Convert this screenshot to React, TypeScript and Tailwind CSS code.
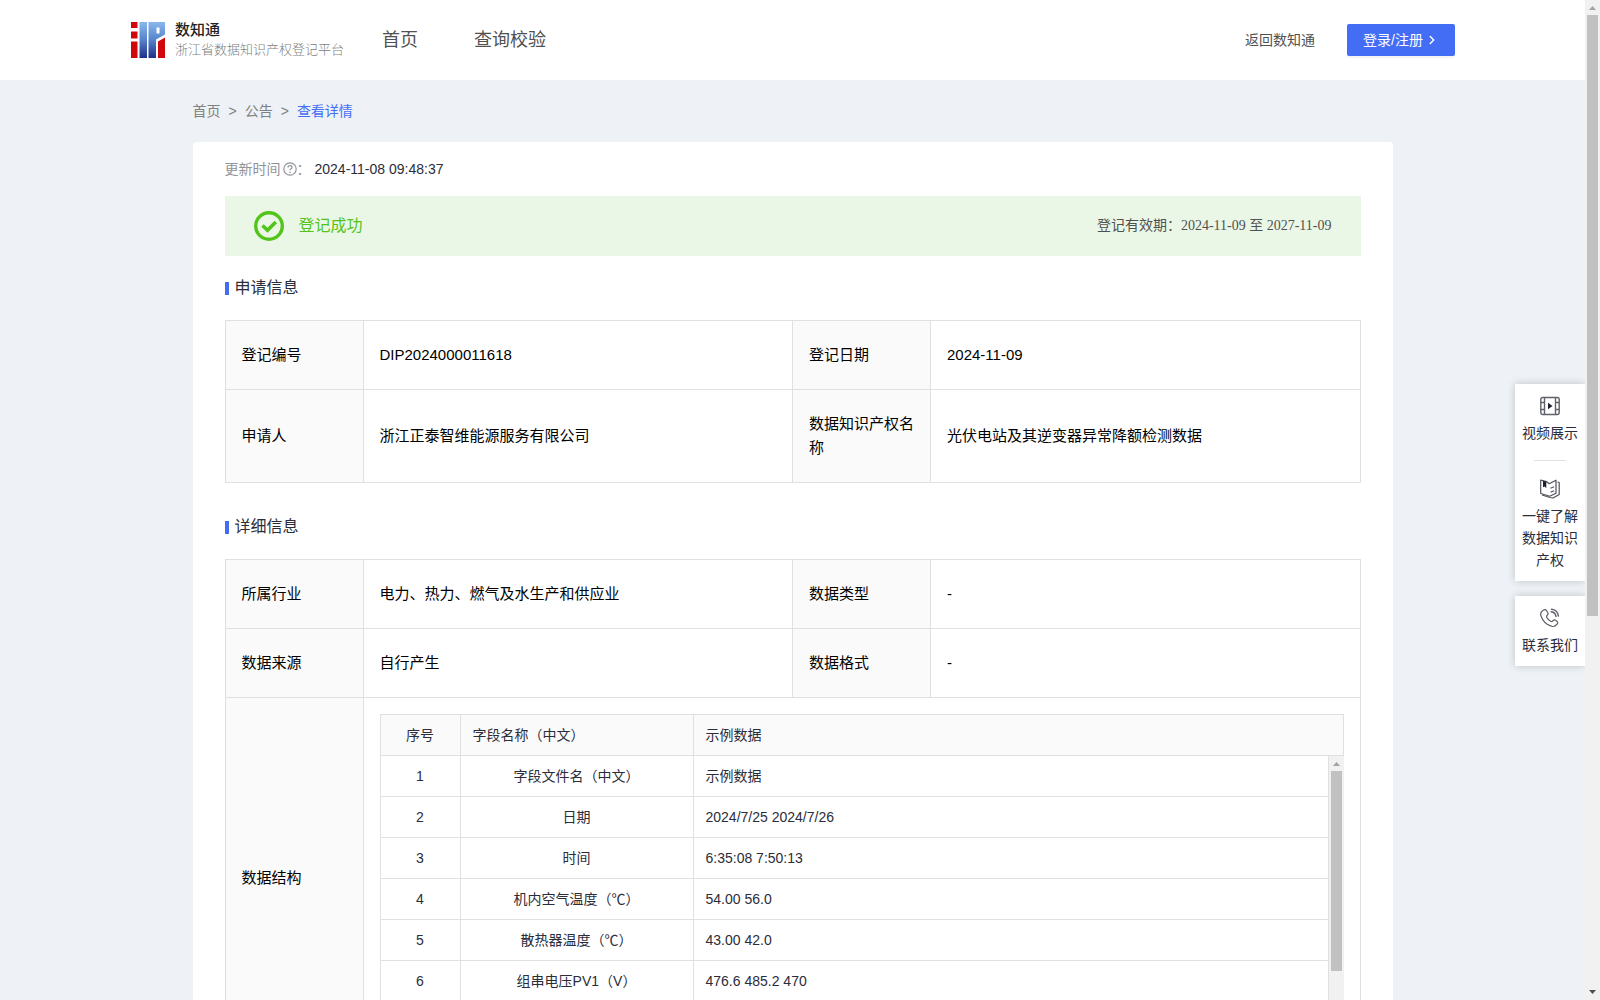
import React from 'react';
import { ChevronRight } from 'lucide-react';

const applyInfo = [
  ['登记编号', 'DIP2024000011618', '登记日期', '2024-11-09'],
  ['申请人', '浙江正泰智维能源服务有限公司', '数据知识产权名称', '光伏电站及其逆变器异常降额检测数据'],
];

const detailInfo = [
  ['所属行业', '电力、热力、燃气及水生产和供应业', '数据类型', '-'],
  ['数据来源', '自行产生', '数据格式', '-'],
];

const fields = [
  ['字段文件名（中文）', '示例数据'],
  ['日期', '2024/7/25 2024/7/26'],
  ['时间', '6:35:08 7:50:13'],
  ['机内空气温度（℃）', '54.00 56.0'],
  ['散热器温度（℃）', '43.00 42.0'],
  ['组串电压PV1（V）', '476.6 485.2 470'],
];

const Logo: React.FC = () => (
  <svg width="34" height="36" viewBox="0 0 34 36" aria-hidden="true">
    <defs>
      <linearGradient id="logoBlue" gradientUnits="userSpaceOnUse" x1="0" y1="0" x2="0" y2="36">
        <stop offset="0" stopColor="#8ab8ec" />
        <stop offset="0.5" stopColor="#5583cb" />
        <stop offset="1" stopColor="#1f2f86" />
      </linearGradient>
    </defs>
    <path d="M0 0h6.500v6H0z" fill="#d0080c" />
    <path d="M0 9.500h6.500v7H0z" fill="#d0080c" />
    <path d="M0 19.500h6.500V36H0z" fill="#d0080c" />
    <path d="M8.500 0h7.500v36h-7.500z" fill="url(#logoBlue)" />
    <path d="M17.500 0H34v12.500L25 17.500V36h-7.500zM25.500 5.500v6h3v-6z" fill="url(#logoBlue)" fillRule="evenodd" />
    <path d="M27 19.500L34 15.500V36h-7z" fill="#d0080c" />
  </svg>
);

const VideoIcon: React.FC = () => (
  <svg width="20" height="20" viewBox="0 0 20 20" fill="none" stroke="#5f616b" strokeWidth="1.400" aria-hidden="true">
    <rect x="0.800" y="1.500" width="18.400" height="17" rx="2" />
    <path d="M4.500 1.500v17M15.500 1.500v17M0.800 6.500h3.700M0.800 13.500h3.700M15.500 6.500h3.700M15.500 13.500h3.700" />
    <path d="M8 6.800v6.400l4.500-3.200z" fill="#1d1f2b" stroke="none" />
  </svg>
);

const BookIcon: React.FC = () => (
  <svg width="20" height="20" viewBox="0 0 20 20" fill="none" stroke="#50525c" strokeWidth="1.200" strokeLinejoin="round" aria-hidden="true">
    <path d="M0.700 1.200l6 1.500 2.500 2L16 1.200v13l-6.300 3L0.700 14.500z" />
    <path d="M17.500 3l1.700.5v12L13 19l-3-.5L2 16" />
    <path d="M10.500 9.200l3.500-1.500M10.500 13.200l3.500-1.500" />
    <path d="M3 1.800l3.300 1v6.400L4.700 7.600 3 8.300z" fill="#1d1f2b" stroke="none" />
  </svg>
);

const PhoneIcon: React.FC = () => (
  <svg width="20" height="20" viewBox="0 0 20 20" fill="none" stroke="#5f616b" strokeWidth="1.200" strokeLinecap="round" strokeLinejoin="round" aria-hidden="true">
    <path d="M3.200 2.200c1.300-1 2.500-.8 3.200.3l1.300 2c.6 1 .4 2-.5 2.800-.8.7-.8 1.400-.3 2.300.9 1.500 2.200 2.800 3.700 3.700.9.500 1.600.4 2.200-.4.700-.9 1.700-1.200 2.700-.6l1.300.9c1.100.7 1.200 1.900.3 3-1.400 1.900-3.400 2.800-5.700 2C6.800 17 2.800 13 1 8 .200 5.700 1 3.600 3.200 2.200z" />
    <path d="M11.500 1.200c3.700.3 6.500 3.100 6.900 6.800M11.200 3.800c2.500.3 4.400 2.100 4.800 4.600" strokeWidth="1.500" />
  </svg>
);

const SuccessIcon: React.FC = () => (
  <svg width="30" height="30" viewBox="0 0 30 30" fill="none" stroke="#52c41a" aria-hidden="true">
    <circle cx="15" cy="15" r="13.300" strokeWidth="3.400" />
    <path d="M8.500 14.500l5 4.700 8.300-8.200" strokeWidth="3.600" />
  </svg>
);

const HelpIcon: React.FC = () => (
  <svg width="14" height="14" viewBox="0 0 14 14" fill="none" stroke="#909399" strokeWidth="1.200" aria-hidden="true">
    <circle cx="7" cy="7" r="6.200" />
    <path d="M5 5.600c0-1.200.9-1.900 2-1.900s2 .7 2 1.800c0 1.300-2 1.400-2 2.800" />
    <circle cx="7" cy="10.200" r="0.800" fill="#909399" stroke="none" />
  </svg>
);

// grey track with arrows, thumb size given by the caller
const ScrollTrack: React.FC<{ thumb: string }> = ({ thumb }) => (
  <div className="flex w-[15px] shrink-0 flex-col items-center bg-[#f1f1f1]" aria-hidden="true">
    <svg width="15" height="15" viewBox="0 0 15 15" className="shrink-0">
      <path d="M4 10h7L7.500 6z" fill="#a3a3a3" />
    </svg>
    <div className="min-h-0 w-full flex-1 px-[2px]">
      <div className={`bg-[#c1c1c1] ${thumb}`} />
    </div>
    <svg width="15" height="15" viewBox="0 0 15 15" className="shrink-0">
      <path d="M4 5h7L7.500 9z" fill="#505050" />
    </svg>
  </div>
);

const SectionTitle: React.FC<{ children: React.ReactNode }> = ({ children }) => (
  <h2 className="flex items-center gap-[6px] text-base leading-6 text-[#2b2d3a]">
    <span className="h-[13px] w-1 bg-[#446df6]" />
    {children}
  </h2>
);

const InfoCols: React.FC = () => (
  <colgroup>
    <col className="w-[138px]" />
    <col />
    <col className="w-[138px]" />
    <col />
  </colgroup>
);

const InfoRow: React.FC<{ cells: string[] }> = ({ cells }) => (
  <tr>
    {cells.map((cell, i) =>
      i % 2 === 0 ? (
        <th key={i} scope="row" className="border border-[#e0e0e0] bg-[#fafafa] px-4 py-[22px] text-left font-normal">
          {cell}
        </th>
      ) : (
        <td key={i} className="border border-[#e0e0e0] px-4 py-[22px]">{cell}</td>
      )
    )}
  </tr>
);

const FieldTable: React.FC = () => (
  <div className="text-sm leading-5 text-[#2b2d3a]">
    <table className="w-full table-fixed border-separate border-spacing-0 border-t border-l border-[#e0e0e0]">
      <thead>
        <tr className="bg-[#fafafa]">
          <th className="w-[80px] border-r border-b border-[#e0e0e0] py-[10px] text-center font-normal">序号</th>
          <th className="w-[233px] border-r border-b border-[#e0e0e0] px-3 py-[10px] text-left font-normal">字段名称（中文）</th>
          <th className="border-r border-b border-[#e0e0e0] px-3 py-[10px] text-left font-normal">示例数据</th>
        </tr>
      </thead>
    </table>
    <div className="flex h-[286px]">
      <div className="min-w-0 flex-1 overflow-y-auto [scrollbar-width:none]">
        <table className="w-full table-fixed border-separate border-spacing-0 border-l border-[#e0e0e0]">
          <tbody>
            {fields.map(([name, sample], i) => (
              <tr key={name}>
                <td className="w-[80px] border-r border-b border-[#e0e0e0] py-[10px] text-center">{i + 1}</td>
                <td className="w-[233px] border-r border-b border-[#e0e0e0] px-3 py-[10px] text-center">{name}</td>
                <td className="border-r border-b border-[#e0e0e0] px-3 py-[10px]">{sample}</td>
              </tr>
            ))}
          </tbody>
        </table>
      </div>
      <ScrollTrack thumb="h-[78%]" />
    </div>
  </div>
);

const SideTools: React.FC = () => (
  <aside className="absolute top-[384px] right-0 flex w-[70px] flex-col gap-[15px] text-sm leading-[22px] text-[#2b2d3a]">
    <div className="flex flex-col items-center bg-white px-[7px] pt-3 shadow-[0_0_8px_rgba(0,0,0,0.2)]">
      <a href="#video" className="flex flex-col items-center gap-[6px] text-center">
        <VideoIcon />
        视频展示
      </a>
      <div className="mt-4 mb-[18px] h-px w-8 bg-[#e0e0e0]" />
      <a href="#guide" className="flex flex-col items-center gap-[6px] pb-[10px] text-center">
        <BookIcon />
        一键了解数据知识产权
      </a>
    </div>
    <a href="#contact" className="flex flex-col items-center gap-[6px] bg-white px-[7px] pt-3 pb-[10px] text-center shadow-[0_0_8px_rgba(0,0,0,0.2)]">
      <PhoneIcon />
      联系我们
    </a>
  </aside>
);

const App: React.FC = () => {
  return (
    <div className="flex h-screen bg-[#eef2f6] font-['Liberation_Sans','Noto_Sans_CJK_SC',sans-serif]">
      <div className="relative min-w-0 flex-1 overflow-hidden">
        <div className="h-full overflow-y-auto [scrollbar-width:none]">
          <header className="flex h-20 items-center bg-white pr-[130px] pl-[131px] text-[#515151]">
            <a href="#home" className="flex items-center gap-[10px]">
              <Logo />
              <span className="flex flex-col">
                <span className="text-[15px] leading-5 font-medium text-[#222222]">数知通</span>
                <span className="text-[13px] leading-5 font-light text-[#808080]">浙江省数据知识产权登记平台</span>
              </span>
            </a>
            <nav className="ml-[38px] flex gap-14 text-lg">
              <a href="#index">首页</a>
              <a href="#check">查询校验</a>
            </nav>
            <a href="#back" className="ml-auto text-sm">返回数知通</a>
            <button className="ml-8 flex h-8 items-center gap-[2px] rounded-[2px] bg-[#446df6] px-4 text-sm text-white shadow-[0_2px_0_rgba(0,0,0,0.045)]">
              登录/注册
              <ChevronRight size={14} strokeWidth={2.5} />
            </button>
          </header>

          <main className="mx-auto max-w-[1200px]">
            <nav className="flex gap-2 pt-5 pb-5 text-sm leading-[22px] text-[#808080]">
              <a href="#index">首页</a>
              <span>&gt;</span>
              <a href="#notice">公告</a>
              <span>&gt;</span>
              <a href="#detail" className="text-[#446df6]">查看详情</a>
            </nav>

            <div className="rounded bg-white px-8 pt-4 pb-8">
              <div className="flex items-center text-sm leading-[22px] text-[#909399]">
                更新时间
                <span className="ml-[2px]"><HelpIcon /></span>
                <span>：</span>
                <span className="ml-1 text-[#2b2d3a]">2024-11-08 09:48:37</span>
              </div>

              <div className="mt-4 flex h-[60px] items-center bg-[#ebf7e6] px-[29px]">
                <SuccessIcon />
                <span className="ml-[15px] text-base text-[#52c41a]">登记成功</span>
                <span className="ml-auto font-['Liberation_Serif','Noto_Sans_CJK_SC',serif] text-sm text-[#515151]">
                  登记有效期：2024-11-09 至 2027-11-09
                </span>
              </div>

              <section className="mt-5">
                <SectionTitle>申请信息</SectionTitle>
                <table className="mt-5 w-full table-fixed border-collapse text-[15px] leading-6 text-black">
                  <InfoCols />
                  <tbody>
                    {applyInfo.map((row) => <InfoRow key={row[0]} cells={row} />)}
                  </tbody>
                </table>
              </section>

              <section className="mt-8">
                <SectionTitle>详细信息</SectionTitle>
                <table className="mt-5 w-full table-fixed border-collapse text-[15px] leading-6 text-black">
                  <InfoCols />
                  <tbody>
                    {detailInfo.map((row) => <InfoRow key={row[0]} cells={row} />)}
                    <tr>
                      <th scope="row" className="border border-[#e0e0e0] bg-[#fafafa] px-4 text-left font-normal">数据结构</th>
                      <td colSpan={3} className="border border-[#e0e0e0] p-4">
                        <FieldTable />
                      </td>
                    </tr>
                  </tbody>
                </table>
              </section>
            </div>
          </main>
        </div>
        <SideTools />
      </div>
      <ScrollTrack thumb="h-[62%]" />
    </div>
  );
};

export default App;
